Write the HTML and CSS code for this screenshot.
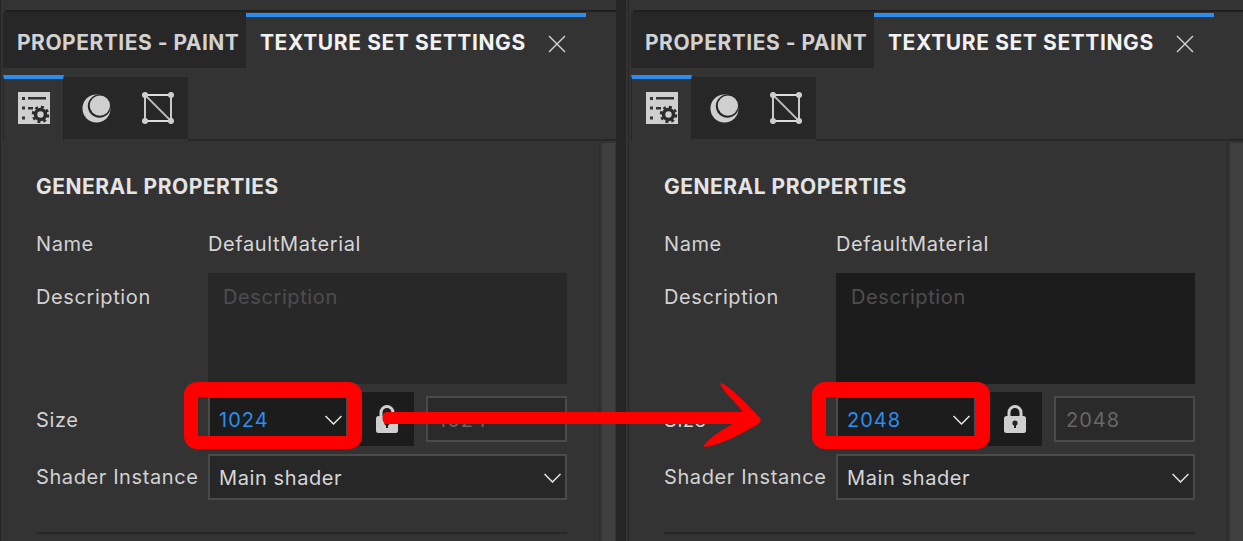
FILE: index.html
```html
<!DOCTYPE html>
<html lang="en">
<head>
    <meta charset="UTF-8">
    <meta name="viewport" content="width=device-width, initial-scale=1.0">
    <title>Texture Set Settings</title>
    <link rel="stylesheet" href="styles.css">
</head>
<body>

<svg width="0" height="0" class="defs">
    <defs>
        <symbol id="icon-settings" viewBox="0 0 32 32">
            <path fill="#cfcfcf" d="M0 0H32V32H0Z"/>
            <path fill="#333" d="M10 5H28V7.500H10ZM4 5H7V8H4ZM4 14.500H7V17.500H4ZM4 24.500H7V27.500H4ZM10 15H15V17.500H10Z"/>
            <circle cx="22.500" cy="22.500" r="5" fill="none" stroke="#2b2b2b" stroke-width="3.600"/>
            <circle cx="22.500" cy="22.500" r="7.600" fill="none" stroke="#2b2b2b" stroke-width="2.400" stroke-dasharray="3 3"/>
        </symbol>
        <symbol id="icon-material" viewBox="0 0 30 30">
            <circle cx="15" cy="15" r="14.500" fill="#cfcfcf"/>
            <circle cx="18" cy="12.500" r="12" fill="#272727"/>
            <circle cx="18.500" cy="12" r="10.500" fill="#cfcfcf"/>
        </symbol>
        <symbol id="icon-mesh" viewBox="0 0 32 32">
            <path fill="none" stroke="#dcdcdc" stroke-width="1.800" d="M3 3H29V29H3Z"/>
            <path fill="none" stroke="#bcbcbc" stroke-width="1.800" d="M3 3L29 29"/>
            <g fill="#cfcfcf">
                <circle cx="3" cy="3" r="3"/>
                <circle cx="29" cy="3" r="3"/>
                <circle cx="3" cy="29" r="3"/>
                <circle cx="29" cy="29" r="3"/>
            </g>
        </symbol>
        <symbol id="icon-chevron" viewBox="0 0 17 10">
            <path fill="none" stroke="#e6e6e6" stroke-width="1.500" d="M0.500 1L8.500 9L16.500 1"/>
        </symbol>
        <symbol id="icon-close" viewBox="0 0 18 18">
            <path fill="none" stroke="#d4d4d4" stroke-width="1.400" d="M1 1L17 17M17 1L1 17"/>
        </symbol>
        <symbol id="icon-lock" viewBox="0 0 24 30">
            <path fill="none" stroke="#cfcfcf" stroke-width="3" d="M6 14V8.500a6 6 0 0 1 12 0V14"/>
            <rect x="1" y="12" width="22" height="17" rx="2.500" fill="#cfcfcf"/>
            <circle cx="12" cy="19" r="2.600" fill="#222"/>
            <path fill="#222" d="M11 20H13V24H11Z"/>
        </symbol>
    </defs>
</svg>

<div class="panels">

    <section class="panel">
        <div class="panel-main">
            <div class="panel-top"></div>
            <div class="tabs">
                <div class="tab">PROPERTIES - PAINT</div>
                <div class="tab tab-active">
                    <span>TEXTURE SET SETTINGS</span>
                    <svg class="icon-close"><use href="#icon-close"/></svg>
                </div>
            </div>
            <div class="subtabs">
                <div class="subtab-active"><svg class="icon-settings"><use href="#icon-settings"/></svg></div>
                <div class="subtab-group">
                    <svg class="icon-material"><use href="#icon-material"/></svg>
                    <svg class="icon-mesh"><use href="#icon-mesh"/></svg>
                </div>
                <div class="subtab-rest"></div>
            </div>
            <div class="panel-body">
                <div class="form">
                    <h2>GENERAL PROPERTIES</h2>
                    <div class="row row-name">
                        <div class="label">Name</div>
                        <div class="value">DefaultMaterial</div>
                    </div>
                    <div class="row row-desc">
                        <div class="label">Description</div>
                        <div class="textarea">Description</div>
                    </div>
                    <div class="row row-size">
                        <div class="label">Size</div>
                        <div class="size-fields">
                            <div class="select select-size">
                                <span class="blue">1024</span>
                                <svg class="icon-chevron"><use href="#icon-chevron"/></svg>
                            </div>
                            <div class="lock"><svg class="icon-lock"><use href="#icon-lock"/></svg></div>
                            <div class="readonly">1024</div>
                        </div>
                    </div>
                    <div class="row row-shader">
                        <div class="label">Shader Instance</div>
                        <div class="select select-shader">
                            <span>Main shader</span>
                            <svg class="icon-chevron"><use href="#icon-chevron"/></svg>
                        </div>
                    </div>
                    <div class="divider"></div>
                </div>
                <div class="scrollbar"></div>
            </div>
        </div>
        <div class="gutter"></div>
    </section>

    <section class="panel">
        <div class="panel-main">
            <div class="panel-top"></div>
            <div class="tabs">
                <div class="tab">PROPERTIES - PAINT</div>
                <div class="tab tab-active">
                    <span>TEXTURE SET SETTINGS</span>
                    <svg class="icon-close"><use href="#icon-close"/></svg>
                </div>
            </div>
            <div class="subtabs">
                <div class="subtab-active"><svg class="icon-settings"><use href="#icon-settings"/></svg></div>
                <div class="subtab-group">
                    <svg class="icon-material"><use href="#icon-material"/></svg>
                    <svg class="icon-mesh"><use href="#icon-mesh"/></svg>
                </div>
                <div class="subtab-rest"></div>
            </div>
            <div class="panel-body">
                <div class="form">
                    <h2>GENERAL PROPERTIES</h2>
                    <div class="row row-name">
                        <div class="label">Name</div>
                        <div class="value">DefaultMaterial</div>
                    </div>
                    <div class="row row-desc">
                        <div class="label">Description</div>
                        <div class="textarea textarea-dark">Description</div>
                    </div>
                    <div class="row row-size">
                        <div class="label">Size</div>
                        <div class="size-fields">
                            <div class="select select-size">
                                <span class="blue">2048</span>
                                <svg class="icon-chevron"><use href="#icon-chevron"/></svg>
                            </div>
                            <div class="lock"><svg class="icon-lock"><use href="#icon-lock"/></svg></div>
                            <div class="readonly">2048</div>
                        </div>
                    </div>
                    <div class="row row-shader">
                        <div class="label">Shader Instance</div>
                        <div class="select select-shader">
                            <span>Main shader</span>
                            <svg class="icon-chevron"><use href="#icon-chevron"/></svg>
                        </div>
                    </div>
                    <div class="divider"></div>
                </div>
                <div class="scrollbar"></div>
            </div>
        </div>
        <div class="gutter"></div>
    </section>

</div>

<!-- red annotation drawn over the two panels -->
<div class="mark mark-left"></div>
<div class="mark mark-right"></div>
<svg class="arrow" viewBox="0 0 1243 541">
    <path fill="#ff0000" d="M387 412H743C736 402 722 391 720 383C728 384 748 405 760 418C761 420 761 422 758 424C742 434 716 447 703 447C708 438 722 430 733 424H387C381 424 381 412 387 412Z"/>
</svg>

</body>
</html>
```

FILE: styles.css
```css
/* General Reset */
html, body {
    margin: 0;
    height: 541px;
    overflow: hidden;
}

body {
    position: relative;
    font-family: Inter, "Noto Sans", sans-serif;
    background-color: #333333;
    color: #d6d6d6;
    font-size: 20px;
    letter-spacing: 0.6px;
}

.defs {
    position: absolute;
}

/* Panels */
.panels {
    display: flex;
    height: 541px;
}

.panel {
    width: 628px;
    flex: none;
    box-sizing: border-box;
    display: flex;
    border-left: 1px solid #262626;
}

.panel-main {
    width: 615px;
    flex: none;
    box-sizing: border-box;
    padding-left: 2px;
    display: flex;
    flex-direction: column;
}

.gutter {
    width: 10px;
    flex: none;
    background-color: #262626;
}

/* Tabs */
.panel-top {
    height: 10px;
    border-bottom: 2px solid #1f1f1f;
    margin-left: 2px;
}

.tabs {
    display: flex;
    height: 56px;
}

.tab {
    width: 243px;
    box-sizing: border-box;
    background-color: #272727;
    color: #d2d2d2;
    font-weight: 700;
    font-size: 21px;
    letter-spacing: 0.5px;
    line-height: 62px;
    padding-left: 14px;
    white-space: nowrap;
}

.tab-active {
    width: 340px;
    background-color: #333333;
    border-top: 4px solid #2a8ef0;
    margin-top: 1px;
    color: #f2f2f2;
    display: flex;
    align-items: center;
    letter-spacing: 0.6px;
    line-height: 1;
    padding: 0 0 1px 14px;
}

.icon-close {
    width: 18px;
    height: 18px;
    margin-left: 22px;
    margin-top: 4px;
}

/* Sub tabs */
.subtabs {
    display: flex;
    height: 73px;
    padding-top: 7px;
    box-sizing: border-box;
}

.subtab-active {
    width: 61px;
    box-sizing: border-box;
    border-top: 4px solid #2a8ef0;
    border-left: 1px solid #262626;
    border-right: 1px solid #262626;
    padding-bottom: 4px;
    display: flex;
    align-items: center;
    justify-content: center;
}

.icon-settings {
    width: 32px;
    height: 32px;
}

.subtab-group {
    width: 124px;
    height: 62px;
    margin-top: 2px;
    background-color: #272727;
    display: flex;
    align-items: center;
    padding-left: 18px;
    box-sizing: border-box;
    gap: 31px;
}

.subtab-rest {
    flex: 1;
    border-bottom: 2px solid #272727;
}

.icon-material {
    width: 29px;
    height: 29px;
}

.icon-mesh {
    width: 32px;
    height: 32px;
}

/* Panel body */
.panel-body {
    flex: 1;
    display: flex;
    padding-left: 33px;
}

.form {
    width: 531px;
    flex: none;
}

.form h2 {
    margin: 33px 0 0;
    font-weight: 700;
    font-size: 21px;
    letter-spacing: 0.5px;
    line-height: 26px;
    color: #e4e4e4;
}

.row {
    display: flex;
}

.label {
    width: 172px;
    flex: none;
    white-space: nowrap;
    color: #d2d2d2;
}

.row-name {
    margin-top: 30px;
    line-height: 28px;
}

.row-desc {
    margin-top: 15px;
    line-height: 34px;
}

.row-desc .label {
    padding-top: 7px;
}

.textarea {
    width: 359px;
    height: 111px;
    box-sizing: border-box;
    background-color: #282828;
    color: #4e4e4e;
    padding: 7px 15px;
    line-height: 34px;
}

.textarea-dark {
    background-color: #1c1c1c;
}

.row-size {
    margin-top: 8px;
    align-items: center;
}

.row-size .label {
    padding-top: 2px;
}

.size-fields {
    display: flex;
    align-items: center;
    width: 359px;
}

.select {
    display: flex;
    align-items: center;
    justify-content: space-between;
    box-sizing: border-box;
    background-color: #272727;
    border: 2px solid #4a4a4a;
    height: 46px;
    padding: 1px 4px 0 9px;
}

.select-size {
    width: 140px;
    background-color: #1c1c1c;
}

.blue {
    color: #2a8ef0;
    letter-spacing: 1px;
}

.lock {
    width: 66px;
    height: 54px;
    background-color: #1c1c1c;
    display: flex;
    align-items: center;
    justify-content: center;
    padding-left: 12px;
    box-sizing: border-box;
}

.icon-lock {
    width: 24px;
    height: 30px;
}

.readonly {
    width: 141px;
    height: 46px;
    margin-left: 12px;
    box-sizing: border-box;
    border: 2px solid #4a4a4a;
    background-color: #2a2a2a;
    color: #666;
    letter-spacing: 1px;
    line-height: 44px;
    padding-left: 10px;
}

.row-shader {
    margin-top: 8px;
    align-items: center;
}

.select-shader {
    width: 359px;
    color: #d6d6d6;
}

.icon-chevron {
    width: 17px;
    height: 10px;
}

.divider {
    margin-top: 32px;
    height: 2px;
    background-color: #262626;
}

.scrollbar {
    width: 13px;
    flex: none;
    margin-left: 35px;
    margin-top: 2px;
    background-color: #3f3f3f;
    box-shadow: -2px 0 0 #333333, -3px 0 0 #2b2b2b;
}

/* Annotation */
.mark {
    position: absolute;
    top: 382px;
    width: 178px;
    height: 67px;
    box-sizing: border-box;
    border-style: solid;
    border-color: #ff0000;
    border-width: 15px 15px 13px 14px;
    border-radius: 13px;
}

.mark-left {
    left: 184px;
}

.mark-right {
    left: 812px;
}

.arrow {
    position: absolute;
    top: 0;
    left: 0;
    width: 1243px;
    height: 541px;
}
```
